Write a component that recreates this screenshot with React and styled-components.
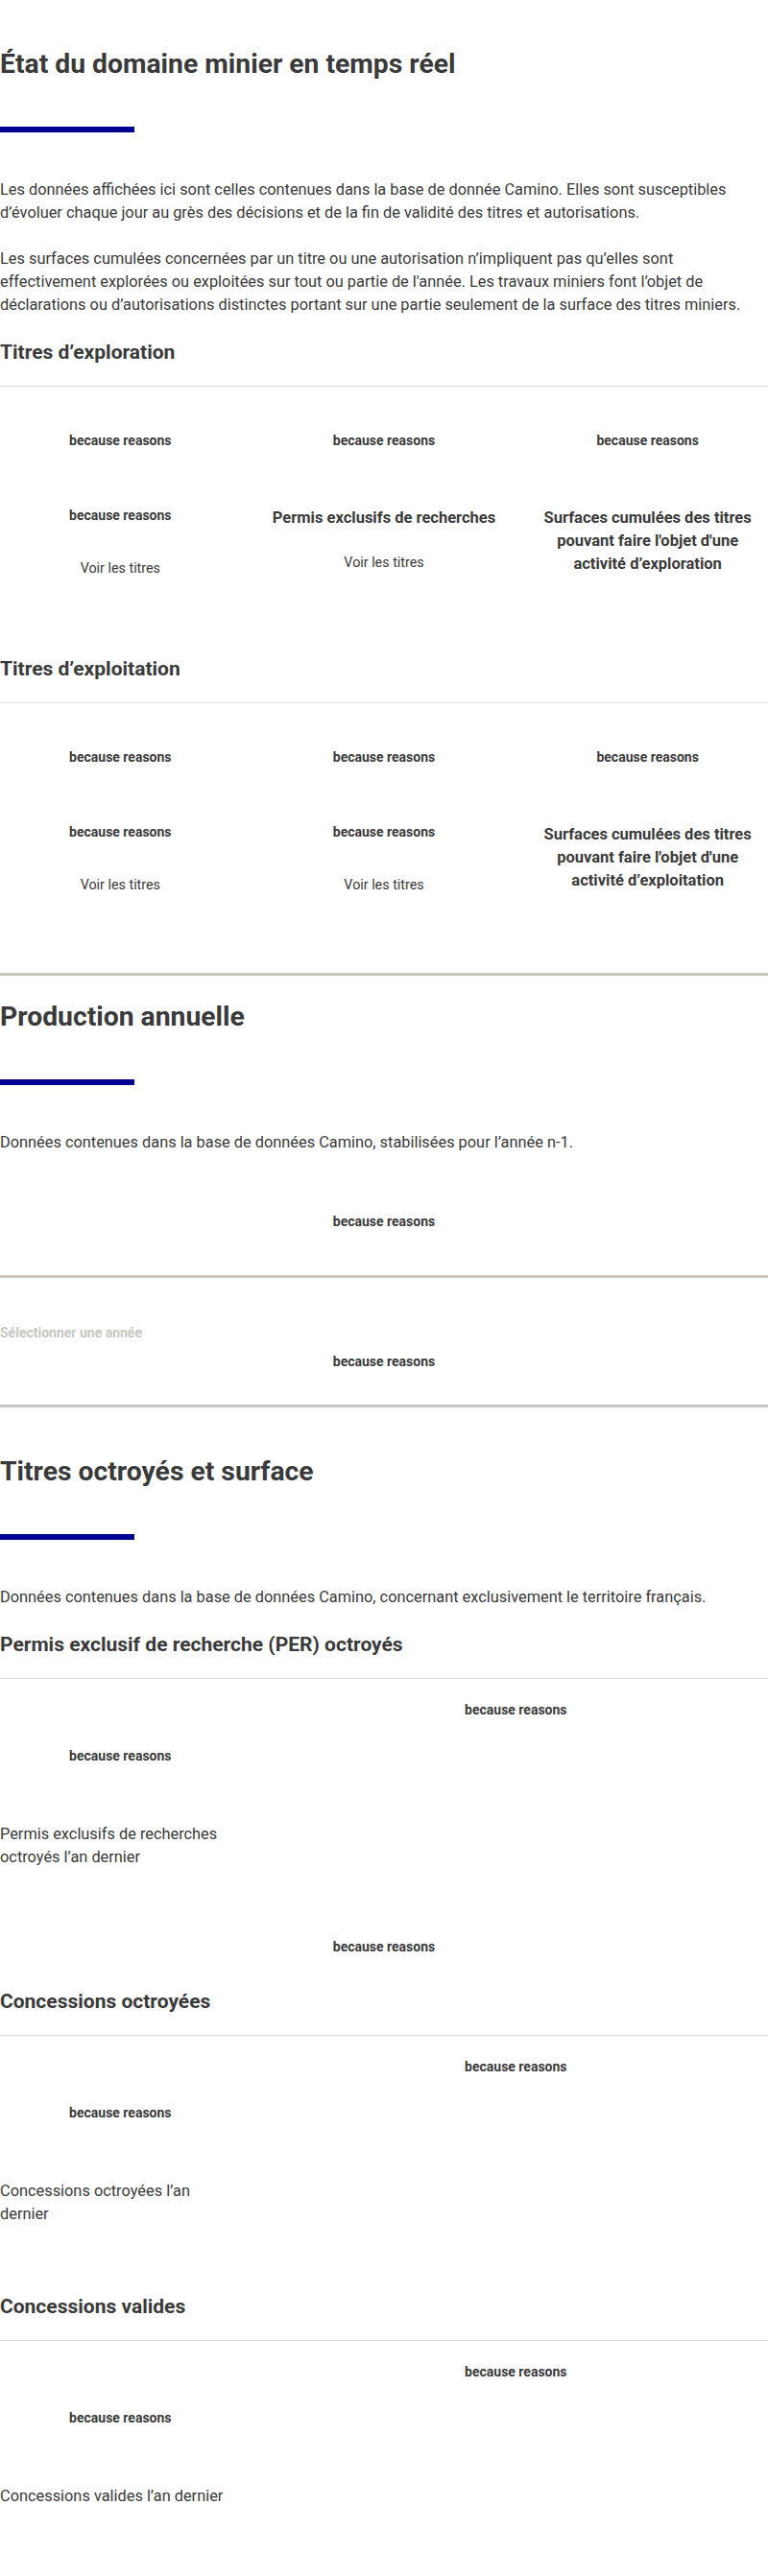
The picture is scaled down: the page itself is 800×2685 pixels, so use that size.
import React from "react";
import styled, { createGlobalStyle } from "styled-components";

const GlobalStyle = createGlobalStyle`
  html, body {
    margin: 0;
    padding: 0;
    background: #ffffff;
  }
  body {
    font-family: Roboto, "Liberation Sans", Arial, sans-serif;
    color: #3a3a3a;
    -webkit-font-smoothing: antialiased;
  }
  * { box-sizing: border-box; }
`;

const Page = styled.main`
  width: 800px;
  display: flex;
  flex-direction: column;
`;

const Section = styled.section`
  padding-top: ${(p) => p.$top}px;
  display: flex;
  flex-direction: column;
`;

const SectionTitle = styled.h2`
  margin: 0;
  font-size: 28.3px;
  line-height: 36px;
  font-weight: 700;
  color: #3a3a3a;
`;

const AccentBar = styled.div`
  width: 140px;
  height: 6px;
  margin-top: 47px;
  background: #000091;
`;

const Lead = styled.p`
  margin: ${(p) => (p.$first ? "48px" : "0")} 0 24px;
  font-size: 16.35px;
  line-height: 24px;
  color: #3a3a3a;
`;

const SubTitle = styled.h3`
  margin: 0 0 22px;
  font-size: 21px;
  line-height: 26px;
  font-weight: 700;
  color: #3a3a3a;
`;

const Rule = styled.hr`
  margin: 0;
  border: 0;
  height: 1px;
  background: #dddddd;
`;

const ThickRule = styled.hr`
  margin: 0;
  border: 0;
  height: 3px;
  background: #cac6bf;
`;

const StatGrid = styled.div`
  display: grid;
  grid-template-columns: repeat(3, 1fr);
  column-gap: 24px;
  align-items: start;
  padding: 46px 0 80px;
`;

const StatCard = styled.div`
  display: flex;
  flex-direction: column;
  align-items: center;
  text-align: center;
`;

const Reason = styled.p`
  margin: 0;
  font-size: 14px;
  line-height: 20px;
  font-weight: 700;
  color: #3a3a3a;
  text-align: center;
`;

const TopReason = styled(Reason)`
  margin-bottom: 58px;
`;

const CardTitle = styled.p`
  margin: 1px 0 0;
  max-width: 240px;
  font-size: 16.5px;
  line-height: 24px;
  font-weight: 700;
  color: #3a3a3a;
`;

const CardLink = styled.a`
  display: block;
  margin-top: ${(p) => p.$gap}px;
  font-size: 14.3px;
  line-height: 24px;
  color: #3a3a3a;
  text-decoration: none;
  cursor: pointer;
`;

const ChartBlock = styled.div`
  padding: 36px 0 46px;
  display: flex;
  justify-content: center;
`;

const FilterBlock = styled.div`
  padding: 47px 0 35px;
  display: flex;
  flex-direction: column;
`;

const SelectLabel = styled.span`
  font-size: 14px;
  line-height: 20px;
  font-weight: 700;
  color: #c6c6c0;
`;

const FilterReason = styled(Reason)`
  margin-top: 10px;
`;

const GrantRow = styled.div`
  display: grid;
  grid-template-columns: repeat(3, 1fr);
  column-gap: 24px;
  align-items: start;
  padding-bottom: 71px;
`;

const GrantSummary = styled.div`
  grid-column: 1;
  padding-top: 70px;
  display: flex;
  flex-direction: column;
`;

const GrantLabel = styled.p`
  margin: 60px 0 0;
  font-size: 16.35px;
  line-height: 24px;
  color: #3a3a3a;
`;

const GrantChart = styled.div`
  grid-column: 2 / span 2;
  padding-top: 22px;
`;

const SurfaceChart = styled.div`
  margin-bottom: 34px;
`;

const R = "because reasons";

function Card({ title, link, linkGap }) {
  return (
    <StatCard>
      <TopReason>{R}</TopReason>
      {title ? <CardTitle>{title}</CardTitle> : <Reason>{R}</Reason>}
      {link && <CardLink $gap={linkGap}>Voir les titres</CardLink>}
    </StatCard>
  );
}

function Grant({ label }) {
  return (
    <GrantRow>
      <GrantSummary>
        <Reason>{R}</Reason>
        <GrantLabel>{label}</GrantLabel>
      </GrantSummary>
      <GrantChart>
        <Reason>{R}</Reason>
      </GrantChart>
    </GrantRow>
  );
}

export default function App() {
  return (
    <>
      <GlobalStyle />
      <Page>
        <Section $top={49}>
          <SectionTitle>État du domaine minier en temps réel</SectionTitle>
          <AccentBar />
          <Lead $first>
            Les données affichées ici sont celles contenues dans la base de donnée Camino. Elles sont
            susceptibles d’évoluer chaque jour au grès des décisions et de la fin de validité des titres et
            autorisations.
          </Lead>
          <Lead>
            Les surfaces cumulées concernées par un titre ou une autorisation n’impliquent pas qu’elles sont
            effectivement explorées ou exploitées sur tout ou partie de l'année. Les travaux miniers font
            l’objet de déclarations ou d’autorisations distinctes portant sur une partie seulement de la
            surface des titres miniers.
          </Lead>
          <SubTitle>Titres d’exploration</SubTitle>
          <Rule />
          <StatGrid>
            <Card link linkGap={33} />
            <Card title="Permis exclusifs de recherches" link linkGap={22} />
            <Card title="Surfaces cumulées des titres pouvant faire l'objet d'une activité d’exploration" />
          </StatGrid>
          <SubTitle>Titres d’exploitation</SubTitle>
          <Rule />
          <StatGrid>
            <Card link linkGap={33} />
            <Card link linkGap={33} />
            <Card title="Surfaces cumulées des titres pouvant faire l'objet d'une activité d’exploitation" />
          </StatGrid>
        </Section>
        <ThickRule />
        <Section $top={25}>
          <SectionTitle>Production annuelle</SectionTitle>
          <AccentBar />
          <Lead $first>Données contenues dans la base de données Camino, stabilisées pour l’année n-1.</Lead>
          <ChartBlock>
            <Reason>{R}</Reason>
          </ChartBlock>
        </Section>
        <ThickRule />
        <FilterBlock>
          <SelectLabel>Sélectionner une année</SelectLabel>
          <FilterReason>{R}</FilterReason>
        </FilterBlock>
        <ThickRule />
        <Section $top={49}>
          <SectionTitle>Titres octroyés et surface</SectionTitle>
          <AccentBar />
          <Lead $first>
            Données contenues dans la base de données Camino, concernant exclusivement le territoire français.
          </Lead>
          <SubTitle>Permis exclusif de recherche (PER) octroyés</SubTitle>
          <Rule />
          <Grant label="Permis exclusifs de recherches octroyés l’an dernier" />
          <SurfaceChart>
            <Reason>{R}</Reason>
          </SurfaceChart>
          <SubTitle>Concessions octroyées</SubTitle>
          <Rule />
          <Grant label="Concessions octroyées l’an dernier" />
          <SubTitle>Concessions valides</SubTitle>
          <Rule />
          <Grant label="Concessions valides l’an dernier" />
        </Section>
      </Page>
    </>
  );
}
